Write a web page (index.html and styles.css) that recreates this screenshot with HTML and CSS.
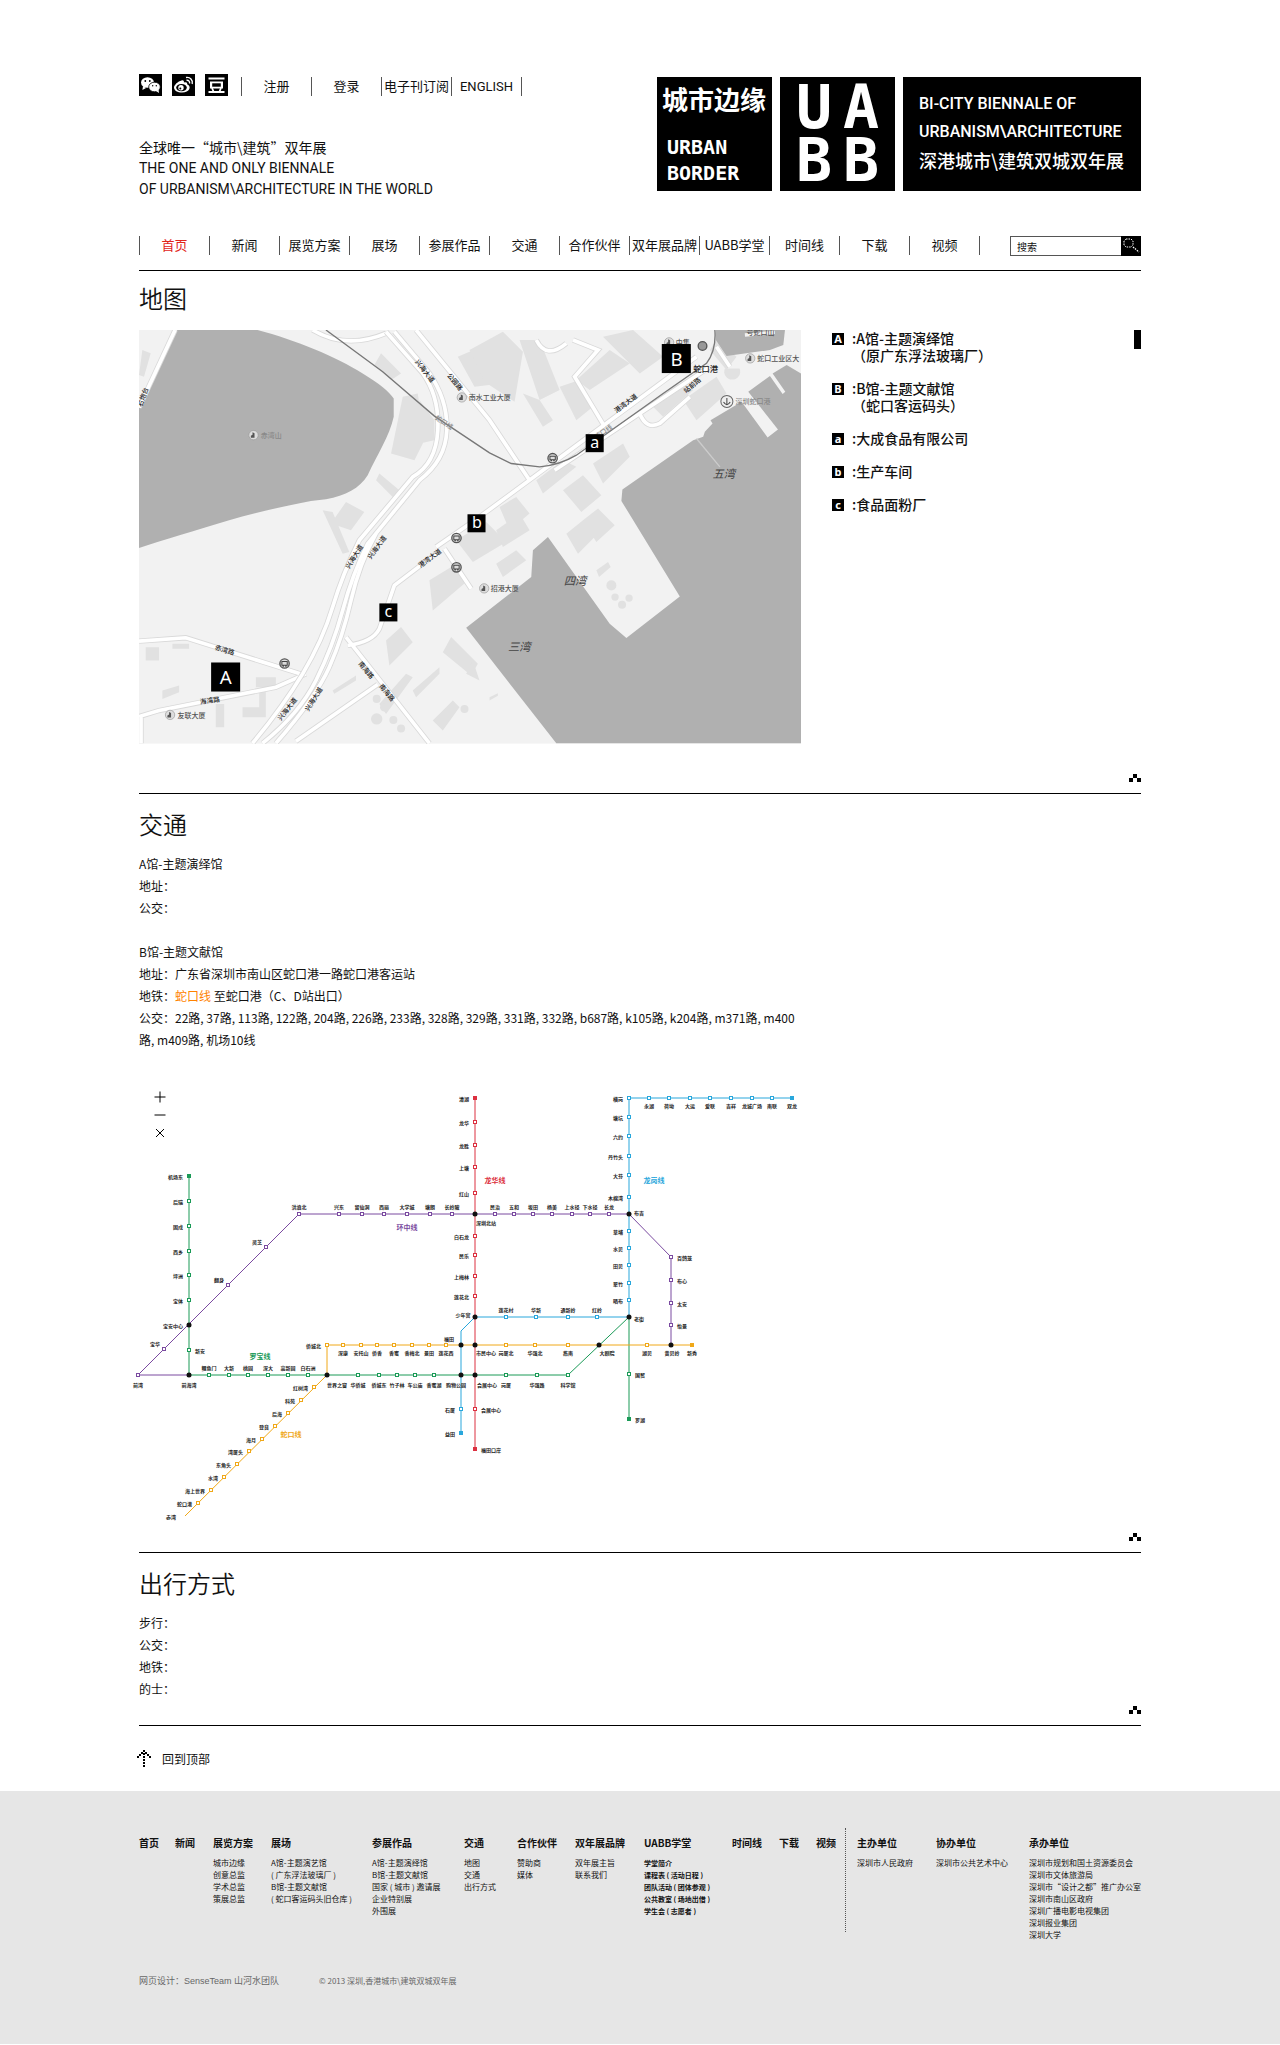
FILE: index.html
```html
<!DOCTYPE html>
<html lang="zh-CN">
<head>
  <meta charset="UTF-8">
  <meta name="viewport" content="width=device-width, initial-scale=1">
  <title>UABB 深港城市\建筑双城双年展</title>
  <link rel="stylesheet" href="styles.css">
</head>
<body>

  <div class="container">

    <header class="header" id="top">
      <div class="header-left">
        <div class="topbar">
          <a class="social" href="#" aria-label="微信">
            <svg viewBox="0 0 23 22"><rect width="23" height="22"/><ellipse cx="8.5" cy="8.5" rx="6.5" ry="5.3" fill="#fff"/><path d="M4 12l-.6 4 3.600-2z" fill="#fff"/><ellipse cx="15.500" cy="13" rx="5.800" ry="4.800" fill="#fff" stroke="#000" stroke-width=".8"/><path d="M17 17l3 2-.5-3.500z" fill="#fff"/><circle cx="6.300" cy="7" r=".9"/><circle cx="10.800" cy="7" r=".9"/><circle cx="13.700" cy="11.700" r=".7"/><circle cx="17.300" cy="11.700" r=".7"/></svg>
          </a>
          <a class="social" href="#" aria-label="微博">
            <svg viewBox="0 0 23 22"><rect width="23" height="22"/><path d="M9.500 6.500c1.600-.6 2.800.2 2.400 2 2-.8 3.800-.3 3.200 1.700 5 2 2.400 8.300-5 8.300C5.500 18.500 2 16.500 2 13.500c0-2.500 4-6.200 7.500-7z" fill="#fff"/><ellipse cx="9.500" cy="13.600" rx="5.300" ry="3.600"/><circle cx="9" cy="13.800" r="2.700" fill="#fff"/><circle cx="8.300" cy="14.400" r="1"/><path d="M14.500 6.300c2-.4 3.600 1.200 3 3.200M14 3.500c4-.8 7.200 2.400 6.200 6.500" fill="none" stroke="#fff" stroke-width="1.400"/></svg>
          </a>
          <a class="social" href="#" aria-label="豆瓣">
            <svg viewBox="0 0 23 22"><rect width="23" height="22"/><path d="M3.500 3.500h16v2h-16zM5 7.500h13v7H5zM3.500 17h16v2h-16z" fill="#fff"/><path d="M7.200 9.300h8.600v3.400H7.200z"/><path d="M7 14l1.500 3.500M16 14l-1.500 3.500" stroke="#fff" stroke-width="1.800"/></svg>
          </a>
          <ul class="links top-links">
            <li><a href="#">注册</a></li>
            <li><a href="#">登录</a></li>
            <li><a href="#">电子刊订阅</a></li>
            <li><a class="en" href="#">ENGLISH</a></li>
          </ul>
        </div>
        <p class="tagline">全球唯一“城市\建筑”双年展<br>
          <span class="en">THE ONE AND ONLY BIENNALE<br>
          OF URBANISM\ARCHITECTURE IN THE WORLD</span></p>
      </div>

      <div class="logos">
        <div class="logo logo-border">
          <b>城市边缘</b>
          <span>URBAN<br>BORDER</span>
        </div>
        <div class="logo logo-uabb">
          <span>U</span><span>A</span><span>B</span><span>B</span>
        </div>
        <div class="logo logo-name">
          <span class="en">BI-CITY BIENNALE OF<br>URBANISM\ARCHITECTURE</span>
          <span class="cn">深港城市\建筑双城双年展</span>
        </div>
      </div>
    </header>

    <nav class="nav">
      <ul class="links">
        <li><a class="active" href="#">首页</a></li>
        <li><a href="#">新闻</a></li>
        <li><a href="#">展览方案</a></li>
        <li><a href="#">展场</a></li>
        <li><a href="#">参展作品</a></li>
        <li><a href="#">交通</a></li>
        <li><a href="#">合作伙伴</a></li>
        <li><a href="#">双年展品牌</a></li>
        <li><a href="#">UABB学堂</a></li>
        <li><a href="#">时间线</a></li>
        <li><a href="#">下载</a></li>
        <li><a href="#">视频</a></li>
      </ul>
      <form class="search">
        <input type="text" placeholder="搜索" aria-label="搜索">
        <button type="button" aria-label="搜索">
          <svg viewBox="0 0 20 20"><path d="M5 3h5l2 2v4l-2 2H5L3 9V5z" fill="none" stroke="#fff" stroke-dasharray="1.500 1"/><path d="M12 11l6 5" stroke="#fff" stroke-width="1.300" stroke-dasharray="1.500 1"/></svg>
        </button>
      </form>
    </nav>

    <!-- map -->
    <section class="section section-first">
      <h2>地图</h2>
      <div class="map-row">
        <svg class="map" viewBox="30 30 1983 1239">
          <defs>
            <g id="roads">
              <path d="M30 262L138 30M30 962l140-10 350 110M30 1188l60-18 350-70 90-40M36 1268v-80"/>
              <path d="M860 30l220 270 120 180M920 680l130-90L1240 450 1700 110M1275 450L1740 140"/>
              <path d="M945 685l80 120M920 700l-125 95-45 130q-20 40-95 50M650 950l250 318M500 1262l245-170M1330 60l75 30-70 80 90 150M1530 280q20 50 60 30l90-80M1760 80l40 60M1220 60q30 60 90 10"/>
              <path d="M550 30q100 60 220 10"/>
            </g>
            <g id="highway">
              <path d="M770 35L880 160Q930 230 925 330T850 470L690 660Q640 760 610 860T520 1060 370 1268"/>
              <path d="M795 35L900 160Q955 240 952 330T870 480L715 670Q670 760 640 870T560 1080 400 1268"/>
              <path d="M740 640Q690 730 665 840T600 1040 440 1268"/>
            </g>
            <g id="bus">
              <circle r="14" fill="#ddd" stroke="#555" stroke-width="4"/>
              <path d="M-8-6H8V5H-8zM-6 8h4M2 8h4" fill="none" stroke="#444" stroke-width="3"/>
            </g>
            <g id="tower">
              <circle r="14" fill="#ddd" stroke="#999" stroke-width="2"/>
              <path d="M-8 8V2l5-3v-8l6 3V8z" fill="#555"/>
            </g>
          </defs>

          <rect class="land" x="30" y="30" width="1983" height="1239"/>
          <!-- blocks -->
          <g class="blocks">
            <path d="M40 90l25 10-20 70-15-5zM755 100l60 60-30 20-50-45zM985 110l70-30 60 30v80l-80 10zM820 230l45-10 20 140-30 60-70-20zM870 240l45 60v60l-45 10zM650 545l55 30-40 55-60-20zM580 570l30 5 50 120-20 5zM750 460l60 50-20 20-50-50z"/>
            <path d="M980 660l90-55 60 60-100 60zM900 780l90-55 20 60-100 85zM770 960l45-40 35 45-70 70zM965 950l80 80-20 35-85-70zM750 1150l80-90 20 10-80 110zM850 1110l80-70v20l-70 70zM610 1110l70-45v15l-65 40zM910 1200l60-60 20 20-50 70z"/>
            <path d="M50 980h40v40H50zM130 970h50v15h-50zM260 1150h25v70h-25zM340 1160h50v-50h20v80h-70zM380 1070h60v30h-60zM100 1110l50-15v20l-50 20zM1030 1020l-20 40 40 20z"/>
            <path d="M1020 90l100-55 60 60-25 150-90-60zM1170 60h60l60 150-60 30zM1180 220l50 20 40 60-30 20zM1340 180l100-90 60 40-120 80zM1420 50l90-20 90 80-70 50zM1290 200l60-20 40 80-50 40zM1560 250l80-60 50 20-90 80zM1660 240l100-70 30 50-90 80zM1390 430l90-60 20 40-80 80zM1220 480l80-60 40 20-100 80zM1300 510l60-45 55 60-60 50zM1310 640l50-40 35 50-50 50zM1360 600l45-35 50 50-55 50zM1110 560l50-30 40 50-60 50zM1100 630l70-50 30 50-80 50zM1100 730l60-40 30 30-70 50zM1760 60l60 50-30 40-50-60z"/>
            <path d="M1400 750l35-25 8 15-35 30zM1080 1130l25-12v8l-25 14z"/>
            <circle cx="1445" cy="795" r="15"/><circle cx="1498" cy="833" r="11"/><circle cx="1456" cy="830" r="11"/><circle cx="1477" cy="853" r="12"/>
            <circle cx="742" cy="1135" r="12"/><circle cx="765" cy="1160" r="13"/><circle cx="742" cy="1195" r="17"/><circle cx="792" cy="1198" r="12"/><circle cx="815" cy="1224" r="12"/><circle cx="1005" cy="1165" r="12"/>
          </g>
          <!-- hill and sea -->
          <path class="water" d="M145 30H385C500 60 620 110 700 160 750 190 780 215 793 235V290C780 350 745 400 715 465 690 505 650 525 590 537L545 542C450 560 370 580 300 600 200 630 100 660 30 683V262z"/>
          <path class="water" d="M1280 1268L1010 922 1205 770 1210 690 1255 650 1440 910 1490 953 1650 828 1475 542 1478 508 1690 360 1720 350 1725 335 1748 310 1742 300 1835 245 1913 352 1944 328 1855 215 1920 168 1958 222 1966 215 1928 160 1970 135 2013 160V1268z"/>
          <path class="water" d="M1758 30H1965L1960 75 1920 90 1790 108 1758 60z"/>
          <path class="pier" d="M1845 45l90-8"/>
          <path class="jetty" d="M1700 355l70 85"/>
          <path class="block" d="M1785 145a24 24 0 1 0 44 0z"/>

          <use href="#roads" class="casing"/>
          <use href="#roads" class="road"/>
          <use href="#highway" class="casing"/>
          <use href="#highway" class="road"/>
          <path class="metro" d="M590 30L760 155 915 288 1080 398 1145 430 1230 440Q1290 435 1340 405L1600 220 1730 130Q1760 90 1755 30"/>

          <use href="#bus" x="466" y="1029"/>
          <use href="#bus" x="981" y="653"/>
          <use href="#bus" x="981" y="741"/>
          <use href="#bus" x="1269" y="414"/>
          <use href="#tower" x="373" y="345"/>
          <use href="#tower" x="123" y="1183"/>
          <use href="#tower" x="997" y="232"/>
          <use href="#tower" x="1064" y="804"/>
          <use href="#tower" x="1618" y="67"/>
          <use href="#tower" x="1861" y="115"/>
          <circle cx="1718" cy="78" r="13" fill="#999" stroke="#555" stroke-width="4"/>
          <circle cx="1791" cy="244" r="18" fill="#eee" stroke="#666" stroke-width="3"/>
          <path d="M1791 234v20M1781 246q10 16 20 0" fill="none" stroke="#444" stroke-width="3"/>

          <g class="place">
            <text x="395" y="345" class="faint">赤湾山</text>
            <text x="145" y="1183">友联大厦</text>
            <text x="1018" y="232">南水工业大厦</text>
            <text x="1084" y="804">招港大厦</text>
            <text x="1638" y="66">中集</text>
            <text x="1690" y="144" class="dark">蛇口港</text>
            <text x="1882" y="115">蛇口工业区大</text>
            <text x="1817" y="244" class="faint">深圳蛇口港</text>
            <text x="1850" y="36">号蛇口山</text>
          </g>
          <g class="street">
            <text transform="translate(888 152) rotate(52)">兴海大道</text>
            <text transform="translate(978 184) rotate(50)">公园路</text>
            <text transform="translate(673 708) rotate(-58)">兴海大道</text>
            <text transform="translate(741 680) rotate(-54)">兴海大道</text>
            <text transform="translate(473 1164) rotate(-52)">兴海大道</text>
            <text transform="translate(552 1135) rotate(-58)">兴海大道</text>
            <text transform="translate(900 712) rotate(-36)">港湾大道</text>
            <text transform="translate(1487 248) rotate(-37)">港湾大道</text>
            <text transform="translate(1686 194) rotate(-40)">站前路</text>
            <text transform="translate(287 987) rotate(16)">赤湾路</text>
            <text transform="translate(242 1138) rotate(-8)">海湾路</text>
            <text transform="translate(712 1048) rotate(50)">南海路</text>
            <text transform="translate(774 1115) rotate(50)">南海路</text>
            <text transform="translate(40 230) rotate(-70)">右炮台</text>
            <text class="gray" transform="translate(945 305) rotate(33)">蛇口线</text>
            <text class="gray" transform="translate(1420 334) rotate(-35)">蛇口线</text>
          </g>
          <g class="bay">
            <text x="1782" y="457">五湾</text>
            <text x="1336" y="780">四湾</text>
            <text x="1169" y="977">三湾</text>
          </g>
          <g class="marker">
            <rect x="246" y="1026" width="87" height="87"/><text class="big" x="290" y="1069">A</text>
            <rect x="1596" y="72" width="87" height="87"/><text class="big" x="1640" y="115">B</text>
            <rect x="1368" y="342" width="54" height="54"/><text x="1395" y="365">a</text>
            <rect x="1014" y="582" width="54" height="54"/><text x="1042" y="606">b</text>
            <rect x="750" y="849" width="54" height="54"/><text x="777" y="871">c</text>
          </g>
        </svg>

        <ul class="legend">
          <li><b>A</b><span>:A馆-主题演绎馆<br>（原广东浮法玻璃厂）</span></li>
          <li><b>B</b><span>:B馆-主题文献馆<br>（蛇口客运码头）</span></li>
          <li><b>a</b><span>:大成食品有限公司</span></li>
          <li><b>b</b><span>:生产车间</span></li>
          <li><b>c</b><span>:食品面粉厂</span></li>
        </ul>
        <div class="scroll-thumb"></div>
      </div>
      <a class="fold" href="#top" aria-label="收起"><i></i><i></i><i></i></a>
    </section>

    <!-- traffic -->
    <section class="section">
      <h2>交通</h2>
      <div class="text">
        <p>A馆-主题演绎馆<br>地址：<br>公交：</p>
        <p>B馆-主题文献馆<br>
          地址：广东省深圳市南山区蛇口港一路蛇口港客运站<br>
          地铁：<a class="line-link" href="#metro">蛇口线</a> 至蛇口港（C、D站出口）<br>
          公交：22路, 37路, 113路, 122路, 204路, 226路, 233路, 328路, 329路, 331路, 332路, b687路, k105路, k204路, m371路, m400路, m409路, 机场10线</p>
      </div>
      <div class="metro-map">
        <svg id="metro" viewBox="139 1088 663 438"></svg>
        <div class="zoom">
          <button type="button" aria-label="放大"><svg viewBox="0 0 12 12"><path d="M6 0.500v11M.5 6h11"/></svg></button>
          <button type="button" aria-label="缩小"><svg viewBox="0 0 12 12"><path d="M.5 6h11"/></svg></button>
          <button type="button" aria-label="关闭"><svg viewBox="0 0 12 12"><path d="M2 2l8 8M10 2l-8 8"/></svg></button>
        </div>
      </div>
      <a class="fold" href="#top" aria-label="收起"><i></i><i></i><i></i></a>
    </section>

    <!-- how to get there -->
    <section class="section">
      <h2>出行方式</h2>
      <div class="text">
        <p>步行：<br>公交：<br>地铁：<br>的士：</p>
      </div>
      <a class="fold" href="#top" aria-label="收起"><i></i><i></i><i></i></a>
    </section>

    <a class="back-top" href="#top">
      <svg viewBox="0 0 14 17"><path d="M6 0h2v2H6zM4 2h2v2H4zM8 2h2v2H8zM2 4h2v2H2zM10 4h2v2h-2zM0 6h2v2H0zM12 6h2v2h-2zM6 3h2v2H6zM6 6h2v2H6zM6 9h2v2H6zM6 12h2v2H6zM6 15h2v2H6z"/></svg>
      回到顶部
    </a>
  </div>

  <footer class="footer">
    <div class="container">
      <div class="footer-cols">
        <div class="footer-menu">
          <div><h3>首页</h3></div>
          <div><h3>新闻</h3></div>
          <div><h3>展览方案</h3>
            <ul><li>城市边缘</li><li>创意总监</li><li>学术总监</li><li>策展总监</li></ul></div>
          <div><h3>展场</h3>
            <ul><li>A馆-主题演艺馆</li><li>( 广东浮法玻璃厂 )</li><li>B馆-主题文献馆</li><li>( 蛇口客运码头旧仓库 )</li></ul></div>
          <div><h3>参展作品</h3>
            <ul><li>A馆-主题演绎馆</li><li>B馆-主题文献馆</li><li>国家 ( 城市 ) 邀请展</li><li>企业特别展</li><li>外围展</li></ul></div>
          <div><h3>交通</h3>
            <ul><li>地图</li><li>交通</li><li>出行方式</li></ul></div>
          <div><h3>合作伙伴</h3>
            <ul><li>赞助商</li><li>媒体</li></ul></div>
          <div><h3>双年展品牌</h3>
            <ul><li>双年展主旨</li><li>联系我们</li></ul></div>
          <div><h3>UABB学堂</h3>
            <ul class="strong"><li>学堂简介</li><li>课程表 ( 活动日程 )</li><li>团队活动 ( 团体参观 )</li><li>公共教室 ( 场地出借 )</li><li>学生会 ( 志愿者 )</li></ul></div>
          <div><h3>时间线</h3></div>
          <div><h3>下载</h3></div>
          <div><h3>视频</h3></div>
        </div>
        <div class="footer-orgs">
          <div><h3>主办单位</h3>
            <ul><li>深圳市人民政府</li></ul></div>
          <div><h3>协办单位</h3>
            <ul><li>深圳市公共艺术中心</li></ul></div>
          <div><h3>承办单位</h3>
            <ul><li>深圳市规划和国土资源委员会</li><li>深圳市文体旅游局</li><li>深圳市“设计之都”推广办公室</li><li>深圳市南山区政府</li><li>深圳广播电影电视集团</li><li>深圳报业集团</li><li>深圳大学</li></ul></div>
        </div>
      </div>
      <p class="copyright"><span>网页设计：SenseTeam 山河水团队</span><small>© 2013 深圳,香港城市\建筑双城双年展</small></p>
    </div>
  </footer>

  <script src="metro.js"></script>
</body>
</html>
```

FILE: styles.css
```css
* {
  box-sizing: border-box;
}
body {
  margin: 0;
  background: #fff;
  color: #111;
  font-family: "Noto Sans CJK SC", "Noto Sans", sans-serif;
  font-size: 12px;
}
h2, h3, p, ul {
  margin: 0;
  padding: 0;
}
ul {
  list-style: none;
}
a {
  color: inherit;
  text-decoration: none;
}
svg {
  display: block;
}
.en {
  font-family: Roboto, "Noto Sans", sans-serif;
}
.container {
  max-width: 1002px;
  margin: 0 auto;
}

/* header */
.header {
  display: flex;
  justify-content: space-between;
  align-items: flex-start;
  padding-top: 74px;
}
.topbar {
  display: flex;
  gap: 10px;
}
.social svg {
  width: 23px;
  height: 22px;
}
.links {
  display: flex;
}
.links li {
  width: 70px;
  height: 19px;
  border-left: 1px solid #555;
  font-size: 13px;
  line-height: 18px;
  text-align: center;
  white-space: nowrap;
}
.links li:last-child {
  width: 71px;
  border-right: 1px solid #555;
}
.links .active {
  color: #e1251b;
}
.top-links {
  margin: 3px 0 0 3px;
}
.tagline {
  margin-top: 41px;
  font-size: 14px;
  line-height: 20px;
}
.logos {
  display: flex;
  gap: 8px;
  padding-top: 3px;
}
.logo {
  height: 114px;
  background: #000;
  color: #fff;
}
.logo-border {
  width: 115px;
  padding: 8px 4px 0 5px;
  white-space: nowrap;
  font-family: "DejaVu Sans Mono", "Noto Sans CJK SC", monospace;
}
.logo-border b {
  display: block;
  font-size: 26px;
  line-height: 32px;
}
.logo-border span {
  display: block;
  padding: 17px 0 0 5px;
  font-size: 20px;
  font-weight: bold;
  line-height: 26px;
}
.logo-uabb {
  display: grid;
  grid-template-columns: 47px 47px;
  grid-auto-rows: 53px;
  justify-content: center;
  align-content: center;
  width: 115px;
  font: bold 60px/53px "DejaVu Sans Mono", monospace;
}
.logo-uabb span {
  display: flex;
  justify-content: center;
}
.logo-name {
  width: 238px;
  padding: 13px 16px 0;
  white-space: nowrap;
}
.logo-name span {
  display: block;
  line-height: 28px;
}
.logo-name .en {
  font-size: 16px;
  font-weight: 500;
}
.logo-name .cn {
  font-size: 18px;
  font-weight: 500;
}

/* main menu */
.nav {
  display: flex;
  justify-content: space-between;
  margin-top: 37px;
  padding-bottom: 14px;
  border-bottom: 1px solid #000;
}
.search {
  display: flex;
  width: 131px;
  height: 20px;
}
.search input {
  flex: 1;
  min-width: 0;
  padding: 0 6px;
  border: 1px solid #555;
  border-right: 0;
  border-radius: 0;
  font: 10px "Noto Sans CJK SC", sans-serif;
}
.search input::placeholder {
  color: #111;
}
.search button {
  width: 20px;
  padding: 0;
  border: 0;
  background: #000;
}

/* sections */
.section {
  padding: 14px 0 11px;
  border-bottom: 1px solid #000;
}
.section-first {
  padding-top: 11px;
}
.section h2 {
  margin-bottom: 13px;
  font-size: 24px;
  font-weight: 350;
  line-height: 32px;
}
.fold {
  display: grid;
  grid-template-columns: repeat(3, 4px);
  grid-template-rows: 4px 4px;
  width: 12px;
  margin: 6px 0 0 auto;
}
.fold i {
  grid-area: 2 / 1;
  background: #000;
}
.fold i:nth-child(2) {
  grid-area: 1 / 2;
}
.fold i:nth-child(3) {
  grid-area: 2 / 3;
}

/* map */
.map-row {
  display: flex;
  align-items: flex-start;
  margin: 16px 0 30px;
}
.map {
  flex: 0 1 662px;
  min-width: 0;
}
.land {
  fill: #f2f2f2;
}
.blocks, .block {
  fill: #e1e1e1;
}
.water {
  fill: #b0b0b0;
}
.pier, .jetty {
  stroke: #f2f2f2;
  stroke-width: 10;
}
.jetty {
  stroke: #ccc;
  stroke-width: 4;
}
.casing, .road {
  fill: none;
  stroke: #d9d9d9;
  stroke-width: 16;
}
.road {
  stroke: #fff;
  stroke-width: 11;
}
.metro {
  fill: none;
  stroke: #777;
  stroke-width: 4;
}
.map text {
  dominant-baseline: central;
}
.place {
  fill: #555;
  font-size: 21px;
  font-weight: 500;
}
.place .faint {
  fill: #888;
}
.place .dark {
  fill: #222;
  font-size: 25px;
}
.street {
  fill: #222;
  font-size: 20px;
  font-weight: 500;
  text-anchor: middle;
}
.street .gray {
  fill: #888;
}
.bay {
  fill: #444;
  font-size: 34px;
  font-style: italic;
  text-anchor: middle;
}
.marker text {
  fill: #fff;
  font-family: "Noto Sans", sans-serif;
  font-size: 48px;
  text-anchor: middle;
}
.marker .big {
  font-size: 56px;
}
.legend {
  flex: 1;
  display: flex;
  flex-direction: column;
  gap: 16px;
  padding-left: 31px;
  font-size: 14px;
  font-weight: 500;
  line-height: 17px;
}
.legend li {
  display: flex;
  gap: 8px;
}
.legend b {
  width: 12px;
  height: 12px;
  margin-top: 3px;
  background: #000;
  color: #fff;
  font: bold 11px/11px "Noto Sans", sans-serif;
  text-align: center;
}
.scroll-thumb {
  width: 7px;
  height: 19px;
  background: #000;
}

/* text */
.text {
  max-width: 664px;
  line-height: 22px;
}
.text p + p {
  margin-top: 22px;
}
.line-link {
  color: #ff8200;
}

/* metro map */
.metro-map {
  position: relative;
  max-width: 663px;
  margin-top: 38px;
}
.metro-map > svg {
  width: 100%;
  overflow: visible;
}
.metro-map text {
  dominant-baseline: central;
  text-anchor: middle;
  font-size: 5px;
  font-weight: bold;
}
.metro-map .right {
  text-anchor: start;
}
.metro-map .left {
  text-anchor: end;
}
.metro-map .line-name {
  font-size: 7px;
}
.zoom {
  position: absolute;
  top: 2px;
  left: 15px;
}
.zoom button {
  display: block;
  width: 12px;
  height: 12px;
  margin-bottom: 6px;
  padding: 0;
  border: 0;
  background: none;
}
.zoom path {
  stroke: #000;
}

.back-top {
  display: flex;
  align-items: center;
  gap: 11px;
  width: 100px;
  margin-left: -2px;
  padding: 23px 0 22px;
  line-height: 20px;
}
.back-top svg {
  width: 14px;
  height: 17px;
}

/* footer */
.footer {
  min-height: 253px;
  padding: 37px 0 56px;
  background: #e6e6e6;
  font-size: 8px;
  line-height: 12px;
  white-space: nowrap;
}
.footer h3 {
  margin-bottom: 8px;
  font-size: 10px;
  line-height: 12px;
}
.footer-cols {
  display: flex;
  align-items: flex-start;
}
.footer-menu {
  flex: 706;
  display: grid;
  grid-template-columns: 36fr 38fr 58fr 101fr 92fr 53fr 58fr 69fr 88fr 47fr 37fr 29fr;
  padding-top: 9px;
}
.footer-orgs {
  flex: 284;
  display: grid;
  grid-template-columns: 79fr 93fr 112fr;
  height: 104px;
  padding: 9px 0 0 11px;
  border-left: 1px dotted #555;
}
.footer .strong {
  font-size: 7px;
  font-weight: bold;
}
.copyright {
  display: flex;
  align-items: center;
  gap: 40px;
  margin-top: 43px;
  color: #666;
}
.copyright span {
  font-family: "Liberation Sans", "Noto Sans CJK SC", sans-serif;
  font-size: 9px;
}
.copyright small {
  font-size: 8px;
}
```

FILE: metro.js
```js
var svg = document.getElementById("metro");

// x, y, name, label side (t, b, l, r), kind: end = terminal
var lines = [
  {
    name: "罗宝线", color: "#1a9a57", at: [260, 1355],
    path: "M189 1175V1374H568L629 1316V1418",
    stations: [
      [189, 1175, "机场东", "l", "end"], [189, 1200, "后瑞", "l"], [189, 1225, "固戍", "l"],
      [189, 1250, "西乡", "l"], [189, 1274, "坪洲", "l"], [189, 1299, "宝体", "l"],
      [189, 1324, "宝安中心", "l"], [189, 1349, "新安", "r"], [189, 1374, "前海湾", "b"],
      [209, 1374, "鲤鱼门", "t"], [229, 1374, "大新", "t"], [248, 1374, "桃园", "t"],
      [268, 1374, "深大", "t"], [288, 1374, "高新园", "t"], [308, 1374, "白石洲", "t"],
      [358, 1374, "华侨城", "b"], [379, 1374, "侨城东", "b"], [397, 1374, "竹子林", "b"],
      [415, 1374, "车公庙", "b"], [434, 1374, "香蜜湖", "b"], [506, 1374, "岗厦", "b"],
      [537, 1374, "华强路", "b"], [568, 1374, "科学馆", "b"],
      [629, 1373, "国贸", "r"], [629, 1418, "罗湖", "r", "end"]
    ]
  },
  {
    name: "环中线", color: "#7a4aa0", at: [407, 1226],
    path: "M189 1374H138L299 1213H629L671 1256V1344",
    stations: [
      [138, 1374, "前湾", "b"], [164, 1348, "宝华", "tl"], [228, 1284, "翻身", "tl"],
      [266, 1246, "灵芝", "tl"], [299, 1213, "洪浪北", "t"], [339, 1213, "兴东", "t"],
      [362, 1213, "留仙洞", "t"], [384, 1213, "西丽", "t"], [407, 1213, "大学城", "t"],
      [430, 1213, "塘朗", "t"], [452, 1213, "长岭陂", "t"], [495, 1213, "民治", "t"],
      [514, 1213, "五和", "t"], [533, 1213, "坂田", "t"], [552, 1213, "杨美", "t"],
      [572, 1213, "上水径", "t"], [590, 1213, "下水径", "t"], [609, 1213, "长龙", "t"],
      [671, 1256, "百鸽笼", "r"], [671, 1279, "布心", "r"], [671, 1302, "太安", "r"], [671, 1324, "怡景", "r"]
    ]
  },
  {
    name: "龙岗线", color: "#29a7dc", at: [654, 1179],
    path: "M792 1097H629V1316H475L461 1330V1432",
    stations: [
      [629, 1097, "横岗", "l"], [649, 1097, "永湖", "b"], [669, 1097, "荷坳", "b"], [690, 1097, "大运", "b"],
      [710, 1097, "爱联", "b"], [731, 1097, "吉祥", "b"], [752, 1097, "龙城广场", "b"], [772, 1097, "南联", "b"],
      [792, 1097, "双龙", "b", "end"], [629, 1116, "塘坑", "l"], [629, 1135, "六约", "l"],
      [629, 1155, "丹竹头", "l"], [629, 1174, "大芬", "l"], [629, 1196, "木棉湾", "l"],
      [629, 1230, "草埔", "l"], [629, 1247, "水贝", "l"], [629, 1264, "田贝", "l"],
      [629, 1282, "翠竹", "l"], [629, 1299, "晒布", "l"], [597, 1316, "红岭", "t"],
      [568, 1316, "通新岭", "t"], [536, 1316, "华新", "t"], [506, 1316, "莲花村", "t"],
      [461, 1408, "石厦", "l"], [461, 1432, "益田", "l", "end"]
    ]
  },
  {
    name: "蛇口线", color: "#f0a818", at: [291, 1433],
    path: "M185 1515L327 1374V1344H692",
    stations: [
      [314, 1386, "红树湾", "l"], [301, 1399, "科苑", "l"], [288, 1412, "后海", "l"], [275, 1425, "登良", "l"],
      [262, 1438, "海月", "l"], [249, 1450, "湾厦头", "l"], [237, 1463, "东角头", "l"], [224, 1476, "水湾", "l"],
      [211, 1489, "海上世界", "l"], [198, 1502, "蛇口港", "l"], [182, 1515, "赤湾", "l", "none"],
      [327, 1344, "侨城北", "l"], [343, 1344, "深康", "b"], [361, 1344, "安托山", "b"], [377, 1344, "侨香", "b"],
      [394, 1344, "香蜜", "b"], [412, 1344, "香梅北", "b"], [429, 1344, "景田", "b"], [446, 1344, "莲花西", "b"],
      [506, 1344, "岗厦北", "b"], [535, 1344, "华强北", "b"], [568, 1344, "燕南", "b"],
      [647, 1344, "湖贝", "b"], [692, 1344, "新秀", "b", "end"]
    ]
  },
  {
    name: "龙华线", color: "#dc3040", at: [495, 1179],
    path: "M475 1097V1448",
    stations: [
      [475, 1097, "清湖", "l", "end"], [475, 1121, "龙华", "l"], [475, 1144, "龙胜", "l"], [475, 1166, "上塘", "l"],
      [475, 1192, "红山", "l"], [475, 1235, "白石龙", "l"], [475, 1254, "民乐", "l"], [475, 1275, "上梅林", "l"],
      [475, 1295, "莲花北", "l"], [475, 1408, "会展中心", "r"], [475, 1448, "福田口岸", "r", "end"]
    ]
  }
];

// transfer stations, drawn last so they cover the crossings
var hubs = [
  [189, 1324], [189, 1374], [327, 1374, "世界之窗", 337, 1383], [461, 1374, "购物公园", 456, 1383],
  [475, 1374, "会展中心", 487, 1383], [461, 1344, "福田", 449, 1337], [475, 1344, "市民中心", 486, 1351],
  [475, 1316, "少年宫", 463, 1313], [475, 1213, "深圳北站", 486, 1221], [629, 1213, "布吉", 639, 1211],
  [629, 1316, "老街", 639, 1317], [599, 1344, "大剧院", 607, 1351], [671, 1344, "黄贝岭", 672, 1351]
];

function label(x, y, text, cls, color) {
  return '<text x="' + x + '" y="' + y + '" class="' + (cls || "") + '" fill="' + (color || "#222") + '">' + text + "</text>";
}

var out = "";
lines.forEach(function (line) {
  out += '<path d="' + line.path + '" fill="none" stroke="' + line.color + '"/>';
});
lines.forEach(function (line) {
  out += label(line.at[0], line.at[1], line.name, "line-name", line.color);
  line.stations.forEach(function (s) {
    var x = s[0], y = s[1], side = s[3];
    if (s[4] !== "none") {
      out += '<rect x="' + (x - 1.5) + '" y="' + (y - 1.5) + '" width="3" height="3" stroke="' + line.color +
        '" fill="' + (s[4] === "end" ? line.color : "#fff") + '"/>';
    }
    if (side === "t") out += label(x, y - 8, s[2]);
    if (side === "b") out += label(x, y + (y === 1374 ? 9 : 7), s[2]);
    if (side === "l") out += label(x - 6, y, s[2], "left");
    if (side === "tl") out += label(x - 4, y - 6, s[2], "left");
    if (side === "r") out += label(x + 6, y, s[2], "right");
  });
});
hubs.forEach(function (h) {
  out += '<circle cx="' + h[0] + '" cy="' + h[1] + '" r="2.500" fill="#111"/>';
  if (h[2]) out += label(h[3], h[4], h[2]);
});
svg.innerHTML = out;
```
